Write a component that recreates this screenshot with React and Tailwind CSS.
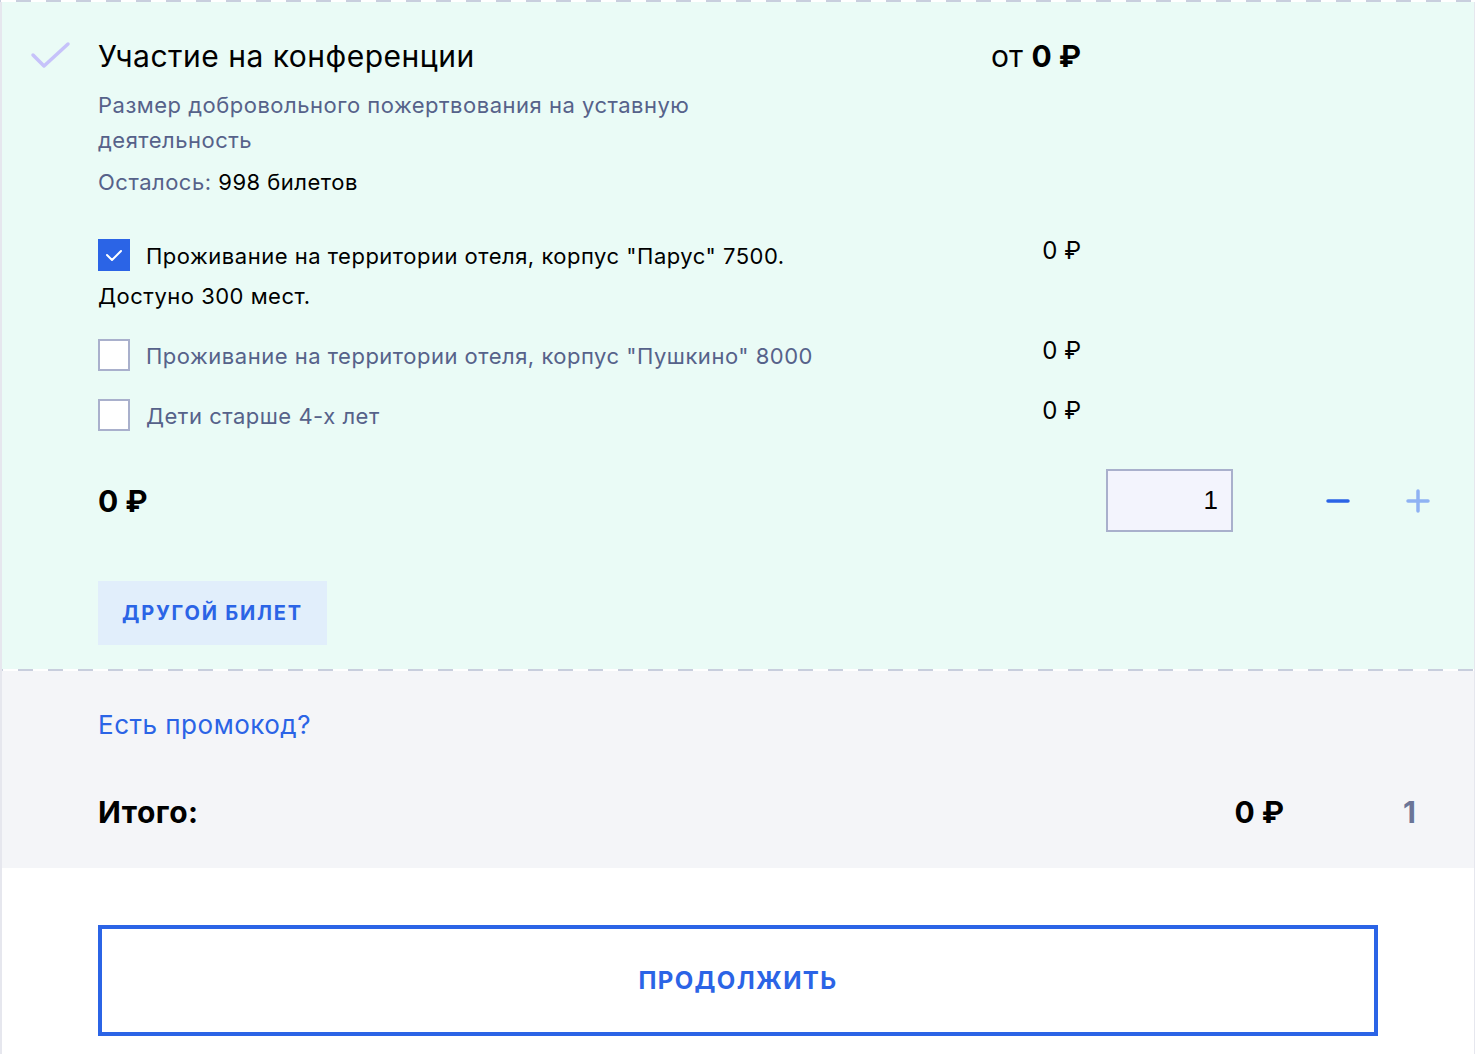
import React from "react";

const dash =
  "bg-[repeating-linear-gradient(90deg,#c8cedd_0_1px,transparent_1px_16px,#c8cedd_16px_30px)]";

function Ruble() {
  return <span>₽</span>;
}

function CheckBox({ checked }) {
  if (checked) {
    return (
      <div className="w-[32px] h-[32px] shrink-0 bg-[#2b64e6] flex items-center justify-center">
        <svg width="32" height="32" viewBox="0 0 32 32" fill="none">
          <polyline points="9,16 14,21 23,12" stroke="#ffffff" strokeWidth="2" strokeLinecap="round" strokeLinejoin="round" />
        </svg>
      </div>
    );
  }
  return <div className="w-[32px] h-[32px] shrink-0 bg-white border-2 border-[#a9b0cc]" />;
}

function OptionRow({ checked, label, className }) {
  return (
    <div className={"flex items-start justify-between " + (className || "")}>
      <div className="flex items-start">
        <CheckBox checked={checked} />
        <span
          className={
            "ml-[16px] pt-[1px] text-[22px] leading-[32px] tracking-[0.5px] " +
            (checked ? "text-black" : "text-[#56628a]")
          }
        >
          {label}
        </span>
      </div>
      <span className="text-[24px] leading-[24px] text-black">
        0 <Ruble />
      </span>
    </div>
  );
}

export default function App() {
  return (
    <div className="min-h-screen bg-white font-[Inter,'Noto_Sans',sans-serif] text-black">
      <div className={"h-[2px] " + dash} />
      <div className="border-l-2 border-r border-[#e6e7ee] min-h-[1052px]">
        {/* Ticket block */}
        <section className="bg-[#eafbf6] flex pt-[36px] pb-[24px]">
          <div className="w-[96px] shrink-0">
            <svg width="96" height="36" viewBox="0 0 96 36" fill="none">
              <polyline
                points="31,17 42,28 66,6"
                stroke="#c6c2fa"
                strokeWidth="3.5"
                strokeLinecap="round"
                strokeLinejoin="round"
              />
            </svg>
          </div>
          <div className="flex-1 pr-[44px]">
            <div className="w-[983px] flex items-baseline justify-between">
              <h2 className="text-[30px] leading-[36px] font-normal tracking-[0.5px]">Участие на конференции</h2>
              <div className="text-[30px] leading-[36px]">
                от <span className="font-bold">0 <Ruble /></span>
              </div>
            </div>
            <p className="mt-[14px] text-[22px] leading-[35px] tracking-[0.5px] text-[#56628a]">
              Размер добровольного пожертвования на уставную
              <br />
              деятельность
            </p>
            <p className="mt-[7px] text-[22px] leading-[35px] tracking-[0.5px] text-[#56628a]">
              Осталось: <span className="text-black">998 билетов</span>
            </p>

            <div className="w-[983px] mt-[39px]">
              <OptionRow checked label={'Проживание на территории отеля, корпус "Парус" 7500.'} />
              <p className="mt-[7px] text-[22px] leading-[35px] tracking-[0.5px] text-black">Достуно 300 мест.</p>
              <OptionRow className="mt-[25px]" label={'Проживание на территории отеля, корпус "Пушкино" 8000'} />
              <OptionRow className="mt-[27px]" label="Дети старше 4-х лет" />
            </div>

            <div className="mt-[37px] h-[63px] flex items-center">
              <div className="flex-1 text-[30px] leading-[36px] font-bold">
                0 <Ruble />
              </div>
              <div className="w-[127px] h-[63px] border-2 border-[#a9b0cc] bg-[#f3f4fd] flex items-center justify-end pr-[13px] text-[26px] font-['Liberation_Sans',sans-serif]">
                1
              </div>
              <button className="ml-[93px] w-[24px] h-[24px] flex items-center justify-center">
                <svg width="24" height="24" viewBox="0 0 24 24" fill="none">
                  <line x1="2" y1="12" x2="22" y2="12" stroke="#2b64e6" strokeWidth="3.5" strokeLinecap="round" />
                </svg>
              </button>
              <button className="ml-[56px] w-[24px] h-[24px] flex items-center justify-center">
                <svg width="24" height="24" viewBox="0 0 24 24" fill="none">
                  <line x1="2" y1="12" x2="22" y2="12" stroke="#8fb2f3" strokeWidth="3.5" strokeLinecap="round" />
                  <line x1="12" y1="2" x2="12" y2="22" stroke="#8fb2f3" strokeWidth="3.5" strokeLinecap="round" />
                </svg>
              </button>
            </div>

            <button className="mt-[49px] h-[64px] px-[24px] bg-[#e1eefb] text-[#2b64e6] text-[20px] font-bold tracking-[1.8px] uppercase">
              Другой билет
            </button>
          </div>
        </section>

        <div className={"h-[2px] " + dash} />

        {/* Summary */}
        <section className="bg-[#f4f5f8] h-[197px] pl-[96px] pr-[58px] pt-[38px]">
          <div className="text-[26px] leading-[32px] tracking-[0.5px] text-[#2b64e6]">Есть промокод?</div>
          <div className="mt-[53px] flex items-baseline text-[30px] leading-[36px] font-bold">
            <div className="flex-1 tracking-[0.5px]">Итого:</div>
            <div>
              0 <Ruble />
            </div>
            <div className="ml-[119px] text-[#6b7597]">1</div>
          </div>
        </section>

        <div className="pt-[57px] pl-[96px]">
          <button className="w-[1280px] h-[111px] border-4 border-[#2b64e6] bg-white text-[#2b64e6] text-[24px] font-bold tracking-[1.4px] uppercase">
            Продолжить
          </button>
        </div>
      </div>
    </div>
  );
}
